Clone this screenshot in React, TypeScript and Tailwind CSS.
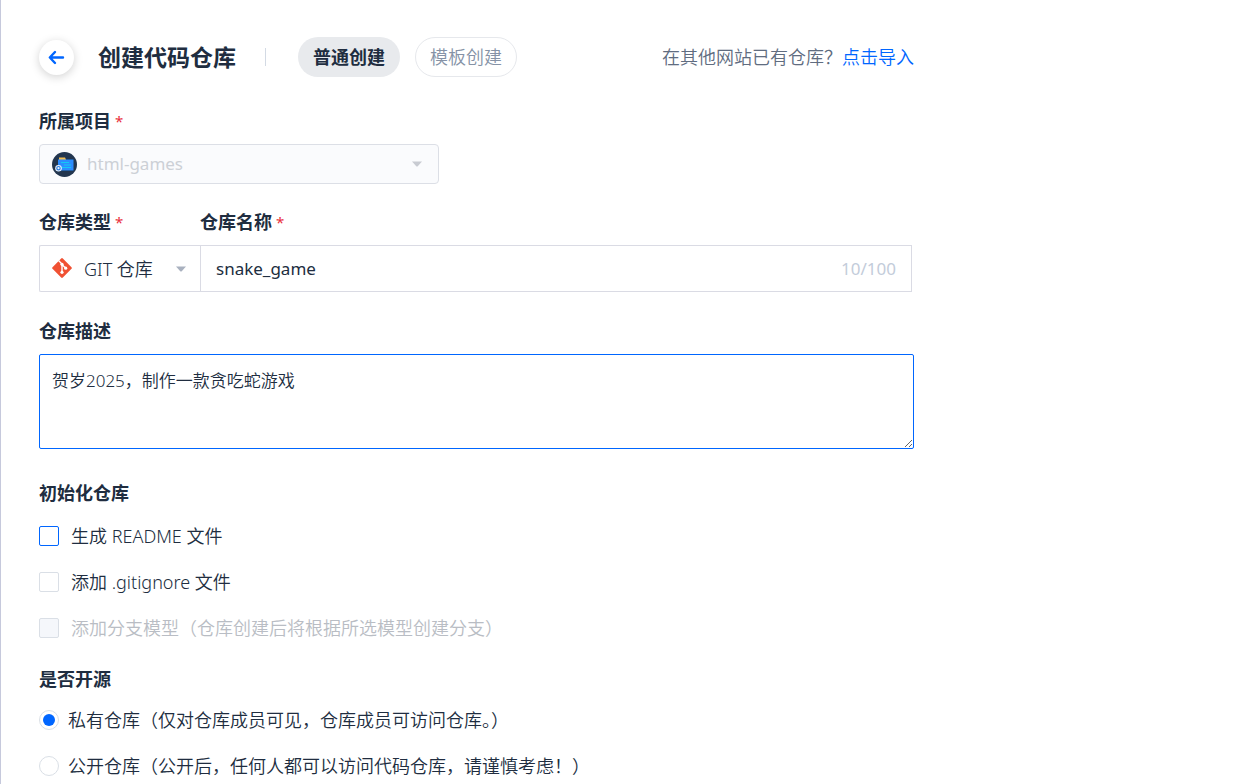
import React, { useState } from 'react'

interface FieldLabelProps {
  text: string
  htmlFor?: string
  required?: boolean
  className?: string
}

const FieldLabel: React.FC<FieldLabelProps> = ({ text, htmlFor, required, className = '' }) => (
  <label htmlFor={htmlFor} className={`flex h-6 items-center text-[18px] leading-6 font-bold ${className}`}>
    {text}
    {required && <span className="ml-1 text-[15px] font-normal text-[#e9303c]">*</span>}
  </label>
)

const BackIcon = () => (
  <svg width="17" height="15" viewBox="0 0 17 15" fill="none" stroke="#0066ff" strokeWidth="2.4" strokeLinecap="round" strokeLinejoin="round">
    <path d="M15 7.5H2M7 2L1.8 7.5L7 13" />
  </svg>
)

const ProjectIcon = () => (
  <svg className="shrink-0" width="25" height="25" viewBox="0 0 25 25">
    <circle cx="12.5" cy="12.5" r="12.5" fill="#22364f" />
    <path d="M7 5.500h6l1 2v3H7z" fill="#f3bd52" />
    <path d="M6 7.500h15.500v11H6z" fill="#2b8cff" />
    <path d="M9 10.500h8M12 13h7M9 15.500h10" stroke="#12c8f5" strokeWidth="1" />
    <circle cx="6.500" cy="16.200" r="3.300" fill="#e8f3ff" />
    <circle cx="6.500" cy="16.200" r="1.700" fill="none" stroke="#2b7de0" strokeWidth="1.200" />
  </svg>
)

const GitIcon = () => (
  <svg className="shrink-0" width="20" height="22" viewBox="0 0 20 22">
    <rect x="2.700" y="2.700" width="14.600" height="14.600" rx="1.200" transform="rotate(45 10 10)" fill="#f05133" />
    <path d="M6.500 2.500L10 6V14.500M10 6.500L13.500 10" fill="none" stroke="#fff" strokeWidth="1.400" />
    <circle cx="10" cy="6.300" r="1.600" fill="#fff" />
    <circle cx="10" cy="14.300" r="1.600" fill="#fff" />
    <circle cx="13.700" cy="10.200" r="1.600" fill="#fff" />
  </svg>
)

const Caret = ({ className }: { className: string }) => (
  <svg className={`pointer-events-none shrink-0 ${className}`} width="10" height="6" viewBox="0 0 10 6" fill="currentColor">
    <path d="M0 0.500h10L5.500 5.600h-1z" />
  </svg>
)

const initOptions = [
  { id: 'readme', text: '生成 README 文件', box: 'border-[#0066ff] bg-white', disabled: false },
  { id: 'gitignore', text: '添加 .gitignore 文件', box: 'border-[#dadfe6] bg-white', disabled: false },
  { id: 'branch', text: '添加分支模型（仓库创建后将根据所选模型创建分支）', box: 'border-[#dadfe6] bg-[#f5f7fb]', disabled: true },
]

const visibilityOptions = [
  { id: 'private', text: '私有仓库（仅对仓库成员可见，仓库成员可访问仓库。）' },
  { id: 'public', text: '公开仓库（公开后，任何人都可以访问代码仓库，请谨慎考虑！）' },
]

const App: React.FC = () => {
  const [name, setName] = useState('snake_game')
  const [description, setDescription] = useState('贺岁2025，制作一款贪吃蛇游戏')
  const [visibility, setVisibility] = useState('private')

  return (
    <main className="min-h-screen border-l border-[#c6c9dc] bg-white px-[38px] pt-[37px] font-['Noto_Sans','Noto_Sans_CJK_SC',sans-serif] text-[18px] leading-6 font-[350] text-[#202d40]">
      <form className="w-full max-w-[875px]" onSubmit={(e) => e.preventDefault()}>
        <header className="flex h-10 items-center whitespace-nowrap">
          <button type="button" aria-label="返回" className="flex size-[35px] items-center justify-center rounded-full bg-white shadow-[0_2px_10px_rgba(0,0,0,0.18)]">
            <BackIcon />
          </button>
          <h1 className="ml-6 text-[23px] leading-8 font-bold">创建代码仓库</h1>
          <span className="ml-[29px] h-[18px] w-px bg-[#d3dae4]" />
          <button type="button" className="ml-8 h-10 w-[102px] rounded-full bg-[#e8eaed] font-bold">普通创建</button>
          <button type="button" className="ml-[15px] h-10 w-[102px] rounded-full border border-[#e6e8ec] text-[#8592a6]">模板创建</button>
          <p className="ml-auto text-[#606c80]">
            在其他网站已有仓库？
            <a href="#import" className="text-[#0066ff]">点击导入</a>
          </p>
        </header>

        <FieldLabel text="所属项目" htmlFor="project" required className="mt-8" />
        <div className="mt-[11px] flex h-10 max-w-[400px] items-center rounded border border-[#dcdfe6] bg-[#fafbfd] pr-4 pl-3">
          <ProjectIcon />
          <select id="project" disabled className="ml-[10px] min-w-0 flex-1 appearance-none bg-transparent text-[17px] font-normal text-[#ccd0d6] disabled:opacity-100">
            <option>html-games</option>
          </select>
          <Caret className="text-[#c8cbd2]" />
        </div>

        <div className="mt-[26px] flex">
          <div className="w-[161px]">
            <FieldLabel text="仓库类型" htmlFor="repo-type" required />
            <div className="mt-[11px] flex h-[47px] items-center rounded-l-xs border border-r-0 border-[#dadbe4] pr-[14px] pl-3">
              <GitIcon />
              <select id="repo-type" className="ml-3 min-w-0 flex-1 appearance-none bg-transparent">
                <option>GIT 仓库</option>
              </select>
              <Caret className="text-[#a9b1bf]" />
            </div>
          </div>
          <div className="min-w-0 flex-1 pr-[2px]">
            <FieldLabel text="仓库名称" htmlFor="repo-name" required />
            <div className="mt-[11px] flex h-[47px] items-center border border-[#dadbe4] px-[15px]">
              <input id="repo-name" type="text" maxLength={100} value={name} onChange={(e) => setName(e.target.value)} className="min-w-0 flex-1 bg-transparent text-[17px] font-normal outline-none" />
              <span className="text-[17px] font-normal text-[#c3ccda]">{name.length}/100</span>
            </div>
          </div>
        </div>

        <FieldLabel text="仓库描述" htmlFor="repo-description" className="mt-[27px]" />
        <textarea
          id="repo-description"
          value={description}
          onChange={(e) => setDescription(e.target.value)}
          className="mt-[11px] block h-[95px] w-full resize-y rounded-xs border border-[#0066ff] px-3 py-[14px] text-[17px] outline-none"
        />

        <fieldset className="mt-8">
          <legend className="h-6 font-bold">初始化仓库</legend>
          <div className="mt-[19px] flex flex-col gap-[22px]">
            {initOptions.map((option) => (
              <label key={option.id} className={`flex h-6 items-center gap-3 ${option.disabled ? 'text-[#b9bdc4]' : ''}`}>
                <input type="checkbox" disabled={option.disabled} className={`size-5 shrink-0 appearance-none rounded-xs border checked:bg-[#0066ff] ${option.box}`} />
                {option.text}
              </label>
            ))}
          </div>
        </fieldset>

        <fieldset className="mt-[27px]">
          <legend className="h-6 font-bold">是否开源</legend>
          <div className="mt-[17px] flex flex-col gap-[22px]">
            {visibilityOptions.map((option) => (
              <label key={option.id} className="flex h-6 items-center gap-[9px]">
                <input
                  type="radio"
                  name="visibility"
                  checked={visibility === option.id}
                  onChange={() => setVisibility(option.id)}
                  className="flex size-5 shrink-0 appearance-none items-center justify-center rounded-full border border-[#dadfe6] before:size-3 before:rounded-full checked:before:bg-[#0066ff]"
                />
                {option.text}
              </label>
            ))}
          </div>
        </fieldset>
      </form>
    </main>
  )
}

export default App
